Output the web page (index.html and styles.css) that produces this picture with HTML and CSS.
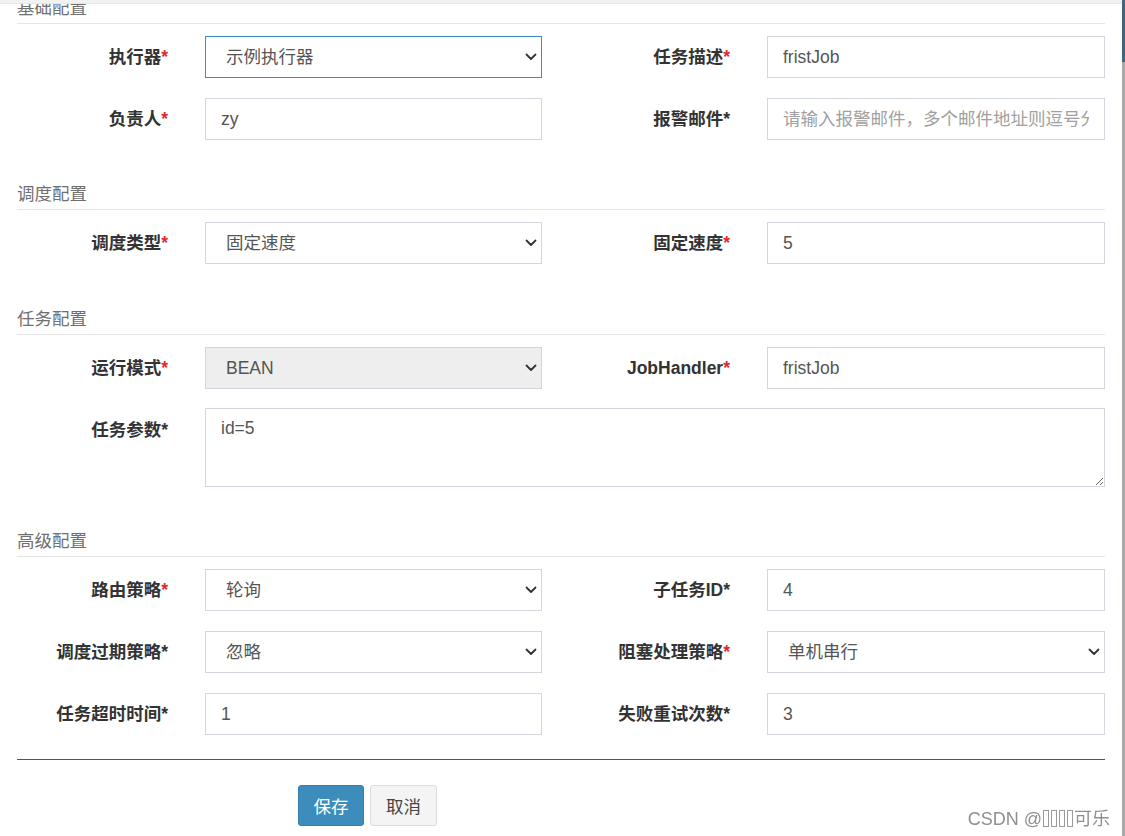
FILE: index.html
```html
<!DOCTYPE html>
<html lang="zh-CN">
<head>
<meta charset="utf-8">
<title>任务配置</title>
<link rel="stylesheet" href="styles.css">
</head>
<body>
<div class="top-strip"></div>
<div class="scroll-strip"><div class="scroll-thumb"></div></div>

<form class="job-form">
  <section class="section">
    <h3 class="section-title">基础配置</h3>
    <div class="form-grid">
      <label class="label">执行器<span class="req red">*</span></label>
      <div class="select-wrap">
        <select class="control focused"><option>示例执行器</option></select>
        <svg class="chev" width="12" height="8" viewBox="0 0 12 8"><path d="M1.5 1.5 L6 6 L10.5 1.5" /></svg>
      </div>
      <label class="label">任务描述<span class="req red">*</span></label>
      <input class="control" type="text" value="fristJob">

      <label class="label">负责人<span class="req red">*</span></label>
      <input class="control" type="text" value="zy">
      <label class="label">报警邮件<span class="req">*</span></label>
      <input class="control" type="text" placeholder="请输入报警邮件，多个邮件地址则逗号分隔">
    </div>
  </section>

  <section class="section">
    <h3 class="section-title">调度配置</h3>
    <div class="form-grid">
      <label class="label">调度类型<span class="req red">*</span></label>
      <div class="select-wrap">
        <select class="control"><option>固定速度</option></select>
        <svg class="chev" width="12" height="8" viewBox="0 0 12 8"><path d="M1.5 1.5 L6 6 L10.5 1.5" /></svg>
      </div>
      <label class="label">固定速度<span class="req red">*</span></label>
      <input class="control" type="text" value="5">
    </div>
  </section>

  <section class="section section-task">
    <h3 class="section-title">任务配置</h3>
    <div class="form-grid">
      <label class="label">运行模式<span class="req red">*</span></label>
      <div class="select-wrap">
        <select class="control disabled" disabled><option>BEAN</option></select>
        <svg class="chev" width="12" height="8" viewBox="0 0 12 8"><path d="M1.5 1.5 L6 6 L10.5 1.5" /></svg>
      </div>
      <label class="label">JobHandler<span class="req red">*</span></label>
      <input class="control" type="text" value="fristJob">

      <label class="label">任务参数<span class="req">*</span></label>
      <textarea class="control area">id=5</textarea>
    </div>
  </section>

  <section class="section section-adv">
    <h3 class="section-title">高级配置</h3>
    <div class="form-grid">
      <label class="label">路由策略<span class="req red">*</span></label>
      <div class="select-wrap">
        <select class="control"><option>轮询</option></select>
        <svg class="chev" width="12" height="8" viewBox="0 0 12 8"><path d="M1.5 1.5 L6 6 L10.5 1.5" /></svg>
      </div>
      <label class="label">子任务ID<span class="req">*</span></label>
      <input class="control" type="text" value="4">

      <label class="label">调度过期策略<span class="req">*</span></label>
      <div class="select-wrap">
        <select class="control"><option>忽略</option></select>
        <svg class="chev" width="12" height="8" viewBox="0 0 12 8"><path d="M1.5 1.5 L6 6 L10.5 1.5" /></svg>
      </div>
      <label class="label">阻塞处理策略<span class="req red">*</span></label>
      <div class="select-wrap">
        <select class="control"><option>单机串行</option></select>
        <svg class="chev" width="12" height="8" viewBox="0 0 12 8"><path d="M1.5 1.5 L6 6 L10.5 1.5" /></svg>
      </div>

      <label class="label">任务超时时间<span class="req">*</span></label>
      <input class="control" type="text" value="1">
      <label class="label">失败重试次数<span class="req">*</span></label>
      <input class="control" type="text" value="3">
    </div>
  </section>

  <hr class="divider">

  <div class="actions">
    <button type="button" class="btn btn-primary">保存</button>
    <button type="button" class="btn btn-default">取消</button>
  </div>
</form>

<div class="watermark">CSDN @<span class="tofu"><i></i><i></i><i></i><i></i></span>可乐</div>
</body>
</html>
```

FILE: styles.css
```css
html, body {
  margin: 0;
  padding: 0;
  background: #fff;
}

body {
  font-family: "Liberation Sans", "Noto Sans CJK SC", sans-serif;
  font-size: 17.5px;
  color: #333;
  width: 1125px;
  height: 836px;
  overflow: hidden;
}

.top-strip {
  position: fixed;
  top: 0;
  left: 0;
  right: 3px;
  height: 3px;
  background: #f2f2f2;
  border-bottom: 1px solid #e8e8e8;
  z-index: 5;
}

.scroll-strip {
  position: fixed;
  top: 0;
  right: 0;
  width: 3px;
  height: 100%;
  background: #a9a9a9;
}

.scroll-thumb {
  height: 62px;
  background: #3d6683;
}

.job-form {
  margin: -2px 0 0 17px;
  width: 1088px;
}

.section + .section {
  margin-top: 44px;
}

.section-task {
  margin-top: 45px !important;
}

.section-title {
  margin: 0 0 12px 0;
  font-size: 17.5px;
  font-weight: normal;
  line-height: 20px;
  padding-bottom: 5px;
  color: #707070;
  border-bottom: 1px solid #e5e5e5;
}

.form-grid {
  display: grid;
  grid-template-columns: 188px 337px 225px 338px;
  row-gap: 20px;
}

.label {
  text-align: right;
  padding-right: 37px;
  font-weight: bold;
  line-height: 42px;
  white-space: nowrap;
  color: #333;
}

.req {
  color: #333;
  font-family: "Liberation Sans", sans-serif;
}

.req.red {
  color: #e02a2a;
}

.control {
  box-sizing: border-box;
  width: 100%;
  height: 42px;
  margin: 0;
  border: 1px solid #d2d6de;
  border-radius: 0;
  padding: 0 15px;
  font-family: "Liberation Sans", "Noto Sans CJK SC", sans-serif;
  font-size: 17.5px;
  color: #555;
  background: #fff;
  outline: none;
}

.control::placeholder {
  color: #a0a0a0;
}

.select-wrap {
  position: relative;
}

select.control {
  -webkit-appearance: none;
  appearance: none;
  padding-left: 20px;
}

select.control.focused {
  border-color: #3c8dbc;
}

select.control.disabled {
  background: #eeeeee;
  color: #555;
  opacity: 1;
}

.chev {
  position: absolute;
  right: 5px;
  top: 17px;
  pointer-events: none;
}

.chev path {
  fill: none;
  stroke: #333;
  stroke-width: 1.8;
  stroke-linecap: round;
  stroke-linejoin: round;
}

.area {
  grid-column: 2 / 5;
  height: 79px;
  margin-top: -1px;
  padding: 8px 15px;
  line-height: 22px;
  resize: vertical;
}

.divider {
  margin: 24px 0 0 0;
  border: 0;
  border-top: 1px solid #555;
  height: 0;
}

.actions {
  display: flex;
  gap: 6px;
  margin: 25px 0 0 281px;
}

.btn {
  box-sizing: border-box;
  height: 41px;
  width: 67px;
  padding: 0;
  border-radius: 3px;
  font-family: "Noto Sans CJK SC", sans-serif;
  font-size: 17.5px;
  cursor: pointer;
}

.btn-primary {
  width: 66px;
  background: #3c8dbc;
  border: 1px solid #367fa9;
  color: #fff;
}

.btn-default {
  background: #f4f4f4;
  border: 1px solid #ddd;
  color: #444;
}

.watermark {
  position: fixed;
  right: 15px;
  bottom: 6px;
  font-family: "Liberation Sans", "Noto Sans CJK SC", sans-serif;
  font-size: 18px;
  color: #8f8f8f;
  text-shadow: 0 0 1px #fff;
  white-space: nowrap;
}

.tofu {
  display: inline-flex;
  gap: 2px;
  margin: 0 1px 0 1px;
  vertical-align: -2px;
}

.tofu i {
  display: block;
  width: 4px;
  height: 15px;
  border: 1px solid #9a9a9a;
}
```
